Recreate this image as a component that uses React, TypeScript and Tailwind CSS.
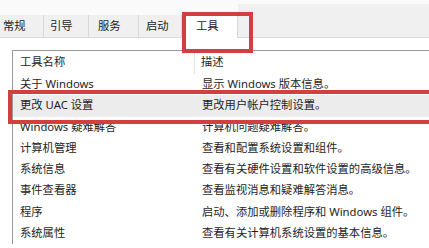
import React from "react";

const rows: [string, string][] = [
  ["关于 Windows", "显示 Windows 版本信息。"],
  ["更改 UAC 设置", "更改用户帐户控制设置。"],
  ["Windows 疑难解答", "计算机问题疑难解答。"],
  ["计算机管理", "查看和配置系统设置和组件。"],
  ["系统信息", "查看有关硬件设置和软件设置的高级信息。"],
  ["事件查看器", "查看监视消息和疑难解答消息。"],
  ["程序", "启动、添加或删除程序和 Windows 组件。"],
  ["系统属性", "查看有关计算机系统设置的基本信息。"],
];

const tabs = [
  { label: "常规", cls: "w-[44px] pl-[3px]" },
  { label: "引导", cls: "w-[45px] pl-[6px]" },
  { label: "服务", cls: "w-[50px] pl-[9px]" },
  { label: "启动", cls: "w-[43px] pl-[7px]" },
];

export default function App() {
  return (
    <div
      className="relative w-[429px] h-[248px] overflow-hidden bg-white text-[#1e1e1e] text-[11.3px]"
      style={{ fontFamily: '"Noto Sans", "Noto Sans CJK SC", sans-serif' }}
    >
      {/* tab strip */}
      <div className="flex h-[38px] items-end bg-[#fafafa]">
        {tabs.map((t) => (
          <div
            key={t.label}
            className={`${t.cls} h-[23px] flex items-center bg-[#f0f0f0] border-r border-b border-[#d9d9d9]`}
          >
            {t.label}
          </div>
        ))}
        <div className="w-[55px] h-[26px] flex items-center pl-[12px] pt-[1px] bg-white border-t border-x border-[#d9d9d9] ml-[1px]">
          工具
        </div>
        <div className="flex-1 self-stretch mt-[4px] bg-[#f0f0f0] border-b border-[#d9d9d9]" />
      </div>

      {/* list */}
      <div className="pl-[12px] pt-[12px]">
        <div className="border-l border-t border-[#9a9a9a]">
          <div className="flex h-[23px] items-center">
            <div className="w-[182px] h-full flex items-center pl-[7px] border-r border-[#e3e3e3]">
              工具名称
            </div>
            <div className="pl-[6px]">描述</div>
          </div>
          {rows.map(([a, b], i) => (
            <div
              key={a}
              className={`flex h-[21.25px] items-center ${i === 1 ? "bg-[#ececec]" : ""}`}
            >
              <div className="w-[183px] pl-[7px] whitespace-nowrap">{a}</div>
              <div className="pl-[6px] whitespace-nowrap">{b}</div>
            </div>
          ))}
        </div>
      </div>

      {/* red highlight boxes */}
      <div className="absolute left-[182px] top-[12px] w-[71px] h-[41px] border-4 border-[#d23f3f]" />
      <div className="absolute left-[8px] top-[90px] w-[440px] h-[34px] border-4 border-[#d23f3f]" />
    </div>
  );
}
